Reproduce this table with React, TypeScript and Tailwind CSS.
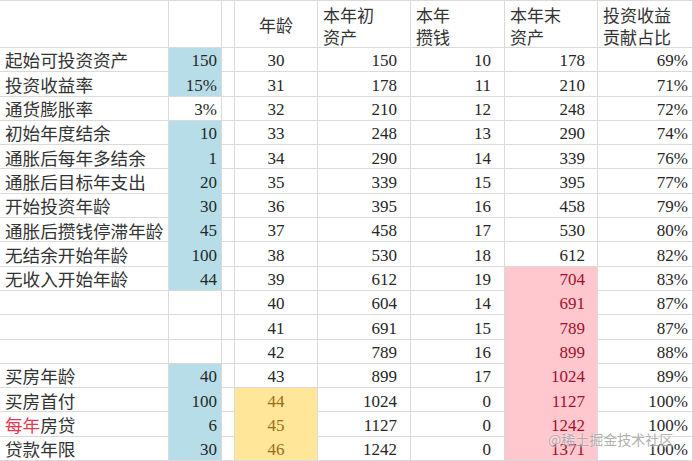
// Spreadsheet view: investment plan parameters on the left, yearly projection on the right.
const CN = "font-['Noto_Sans_CJK_SC',sans-serif]"

type Row = {
  label: string
  value: string
  blue: boolean
  age: string
  start: string
  save: string
  end: string
  pct: string
}

const ROWS: Row[] = [
  { label: '起始可投资资产', value: '150', blue: true, age: '30', start: '150', save: '10', end: '178', pct: '69%' },
  { label: '投资收益率', value: '15%', blue: true, age: '31', start: '178', save: '11', end: '210', pct: '71%' },
  { label: '通货膨胀率', value: '3%', blue: false, age: '32', start: '210', save: '12', end: '248', pct: '72%' },
  { label: '初始年度结余', value: '10', blue: true, age: '33', start: '248', save: '13', end: '290', pct: '74%' },
  { label: '通胀后每年多结余', value: '1', blue: true, age: '34', start: '290', save: '14', end: '339', pct: '76%' },
  { label: '通胀后目标年支出', value: '20', blue: true, age: '35', start: '339', save: '15', end: '395', pct: '77%' },
  { label: '开始投资年龄', value: '30', blue: true, age: '36', start: '395', save: '16', end: '458', pct: '79%' },
  { label: '通胀后攒钱停滞年龄', value: '45', blue: true, age: '37', start: '458', save: '17', end: '530', pct: '80%' },
  { label: '无结余开始年龄', value: '100', blue: true, age: '38', start: '530', save: '18', end: '612', pct: '82%' },
  { label: '无收入开始年龄', value: '44', blue: true, age: '39', start: '612', save: '19', end: '704', pct: '83%' },
  { label: '', value: '', blue: false, age: '40', start: '604', save: '14', end: '691', pct: '87%' },
  { label: '', value: '', blue: false, age: '41', start: '691', save: '15', end: '789', pct: '87%' },
  { label: '', value: '', blue: false, age: '42', start: '789', save: '16', end: '899', pct: '88%' },
  { label: '买房年龄', value: '40', blue: true, age: '43', start: '899', save: '17', end: '1024', pct: '89%' },
  { label: '买房首付', value: '100', blue: true, age: '44', start: '1024', save: '0', end: '1127', pct: '100%' },
  { label: '每年房贷', value: '6', blue: true, age: '45', start: '1127', save: '0', end: '1242', pct: '100%' },
  { label: '贷款年限', value: '30', blue: true, age: '46', start: '1242', save: '0', end: '1371', pct: '100%' },
]

export default function App() {
  return (
    <div className="relative w-[693px] h-[461px] overflow-hidden bg-white text-[#262626]">
      <div className="grid grid-cols-[169px_53px_13px_83px_93px_94px_93px_95px] grid-rows-[47px_repeat(17,24.3px)] border-t border-[#dadada] text-[17px] font-['Liberation_Serif',serif]">
        {/* header */}
        <div className="border-r border-b border-[#dadada]" />
        <div className="border-r border-b border-[#dadada]" />
        <div className="border-r border-b border-[#dadada]" />
        <div className={`border-r border-b border-[#dadada] flex items-center justify-center pt-[2px] text-[#333] ${CN}`}>年龄</div>
        <div className={`border-r border-b border-[#dadada] pl-[5px] pt-[3px] leading-[22px] text-[#333] ${CN}`}>本年初<br />资产</div>
        <div className={`border-r border-b border-[#dadada] pl-[5px] pt-[3px] leading-[22px] text-[#333] ${CN}`}>本年<br />攒钱</div>
        <div className={`border-r border-b border-[#dadada] pl-[5px] pt-[3px] leading-[22px] text-[#333] ${CN}`}>本年末<br />资产</div>
        <div className={`border-r border-b border-[#dadada] pl-[5px] pt-[3px] leading-[22px] text-[#333] ${CN}`}>投资收益<br />贡献占比</div>

        {ROWS.map((r, i) => {
          const nextBlue = i + 1 < ROWS.length && ROWS[i + 1].blue
          const yellow = i >= 14
          const nextYellow = i + 1 >= 14 && i + 1 < ROWS.length
          const pink = i >= 9
          const nextPink = i + 1 < ROWS.length
          return (
            <div key={i} className="contents">
              <div className={`border-r border-b border-[#dadada] flex items-center pl-[5px] pt-[2px] whitespace-nowrap text-[17.6px] text-[#333] ${CN}`}>
                {r.label === '每年房贷' ? (
                  <>
                    <span className="text-[#e8384f]">每年</span>房贷
                  </>
                ) : (
                  r.label
                )}
              </div>
              <div
                className={`border-r border-b flex items-center justify-end pr-[4px] pt-[3px] ${
                  r.blue ? 'bg-[#b7dee8]' : ''
                } ${r.blue && nextBlue ? 'border-b-[#b7dee8]' : 'border-b-[#dadada]'} border-r-[#dadada]`}
              >
                {r.value}
              </div>
              <div className="border-r border-b border-[#dadada]" />
              <div
                className={`border-r border-b flex items-center justify-center pt-[3px] border-r-[#dadada] ${
                  yellow ? 'bg-[#ffe699] text-[#9c6d14]' : ''
                } ${yellow && nextYellow ? 'border-b-[#ffe699]' : 'border-b-[#dadada]'}`}
              >
                {r.age}
              </div>
              <div className="border-r border-b border-[#dadada] flex items-center justify-end pr-[13px] pt-[3px]">{r.start}</div>
              <div className="border-r border-b border-[#dadada] flex items-center justify-end pr-[13px] pt-[3px]">{r.save}</div>
              <div
                className={`border-r border-b flex items-center justify-end pr-[12px] pt-[3px] border-r-[#dadada] ${
                  pink ? 'bg-[#ffc7ce] text-[#a3102a]' : ''
                } ${pink && nextPink ? 'border-b-[#ffc7ce]' : 'border-b-[#dadada]'}`}
              >
                {r.end}
              </div>
              <div className="border-r border-b border-[#dadada] flex items-center justify-end pr-[4px] pt-[3px]">{r.pct}</div>
            </div>
          )
        })}
      </div>

      {/* site watermark */}
      <div className="absolute left-[548px] top-[429px] text-[14px] leading-[20px] text-[#9a9a9a]/80 font-['Noto_Sans_CJK_SC',sans-serif] whitespace-nowrap [text-shadow:0_0_2px_#fff]">
        @稀土掘金技术社区
      </div>
    </div>
  )
}
